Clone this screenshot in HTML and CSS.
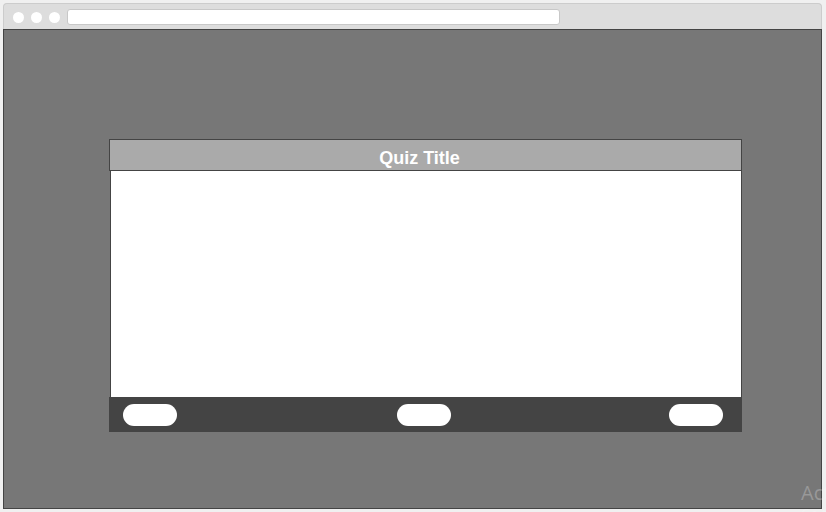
FILE: index.html
```html
<!DOCTYPE html>
<html>
<head>
<meta charset="utf-8">
<link rel="stylesheet" href="styles.css">
</head>
<body>
<div class="frame">
  <div class="topbar">
    <span class="dot"></span>
    <span class="dot"></span>
    <span class="dot"></span>
    <span class="address"></span>
  </div>
  <div class="viewport">
    <div class="quiz">
      <div class="quiz-header">Quiz Title</div>
      <div class="quiz-body"></div>
      <div class="quiz-footer">
        <span class="pill"></span>
        <span class="pill pill-mid"></span>
        <span class="pill"></span>
      </div>
    </div>
  </div>
</div>
<div class="watermark">
  <div class="wm-title">Activate Windows</div>
  <div class="wm-sub">Go to Settings to activate Windows.</div>
</div>
</body>
</html>
```

FILE: styles.css
```css
html, body {
  margin: 0;
  padding: 0;
}
body {
  background: #f0f0f0;
  width: 826px;
  height: 512px;
  overflow: hidden;
  position: relative;
  font-family: "Liberation Sans", Arial, sans-serif;
}
.frame {
  margin: 3px 0 0 3px;
  width: 819px;
}
.topbar {
  box-sizing: border-box;
  height: 26px;
  background: #dddddd;
  border: 1px solid #cccccc;
  border-bottom: none;
  border-radius: 4px 4px 0 0;
  display: flex;
  align-items: center;
  padding-left: 9px;
  padding-top: 1px;
}
.dot {
  width: 11px;
  height: 11px;
  border-radius: 50%;
  background: #ffffff;
  margin-right: 7px;
  flex: none;
}
.dot:nth-child(3) {
  margin-right: 7px;
}
.address {
  box-sizing: border-box;
  width: 493px;
  height: 16px;
  background: #ffffff;
  border: 1px solid #c8c8c8;
  border-radius: 3px;
  flex: none;
}
.viewport {
  box-sizing: border-box;
  height: 480px;
  background: #777777;
  border: 1px solid #444444;
  padding: 109px 0 0 105px;
}
.quiz {
  width: 633px;
  display: flex;
  flex-direction: column;
}
.quiz-header {
  box-sizing: border-box;
  height: 32px;
  background: #aaaaaa;
  border: 1px solid #444444;
  color: #ffffff;
  font-weight: bold;
  font-size: 18px;
  line-height: 24px;
  padding-top: 6px;
  padding-right: 12px;
  text-align: center;
}
.quiz-body {
  box-sizing: border-box;
  height: 226px;
  margin-left: 1px;
  background: #ffffff;
  border-left: 1px solid #444444;
  border-right: 1px solid #444444;
}
.quiz-footer {
  box-sizing: border-box;
  height: 35px;
  background: #444444;
  display: flex;
  justify-content: space-between;
  align-items: flex-start;
  padding: 7px 19px 0 14px;
}
.pill {
  width: 54px;
  height: 22px;
  border-radius: 11px;
  background: #ffffff;
}
.pill-mid {
  margin-left: 2px;
}
.watermark {
  position: absolute;
  left: 801px;
  top: 481px;
  font-family: "Open Sans", sans-serif;
  color: rgba(255, 255, 255, 0.25);
  white-space: nowrap;
}
.wm-title {
  font-size: 20px;
  line-height: 24px;
}
.wm-sub {
  font-size: 13px;
  line-height: 16px;
}
```
